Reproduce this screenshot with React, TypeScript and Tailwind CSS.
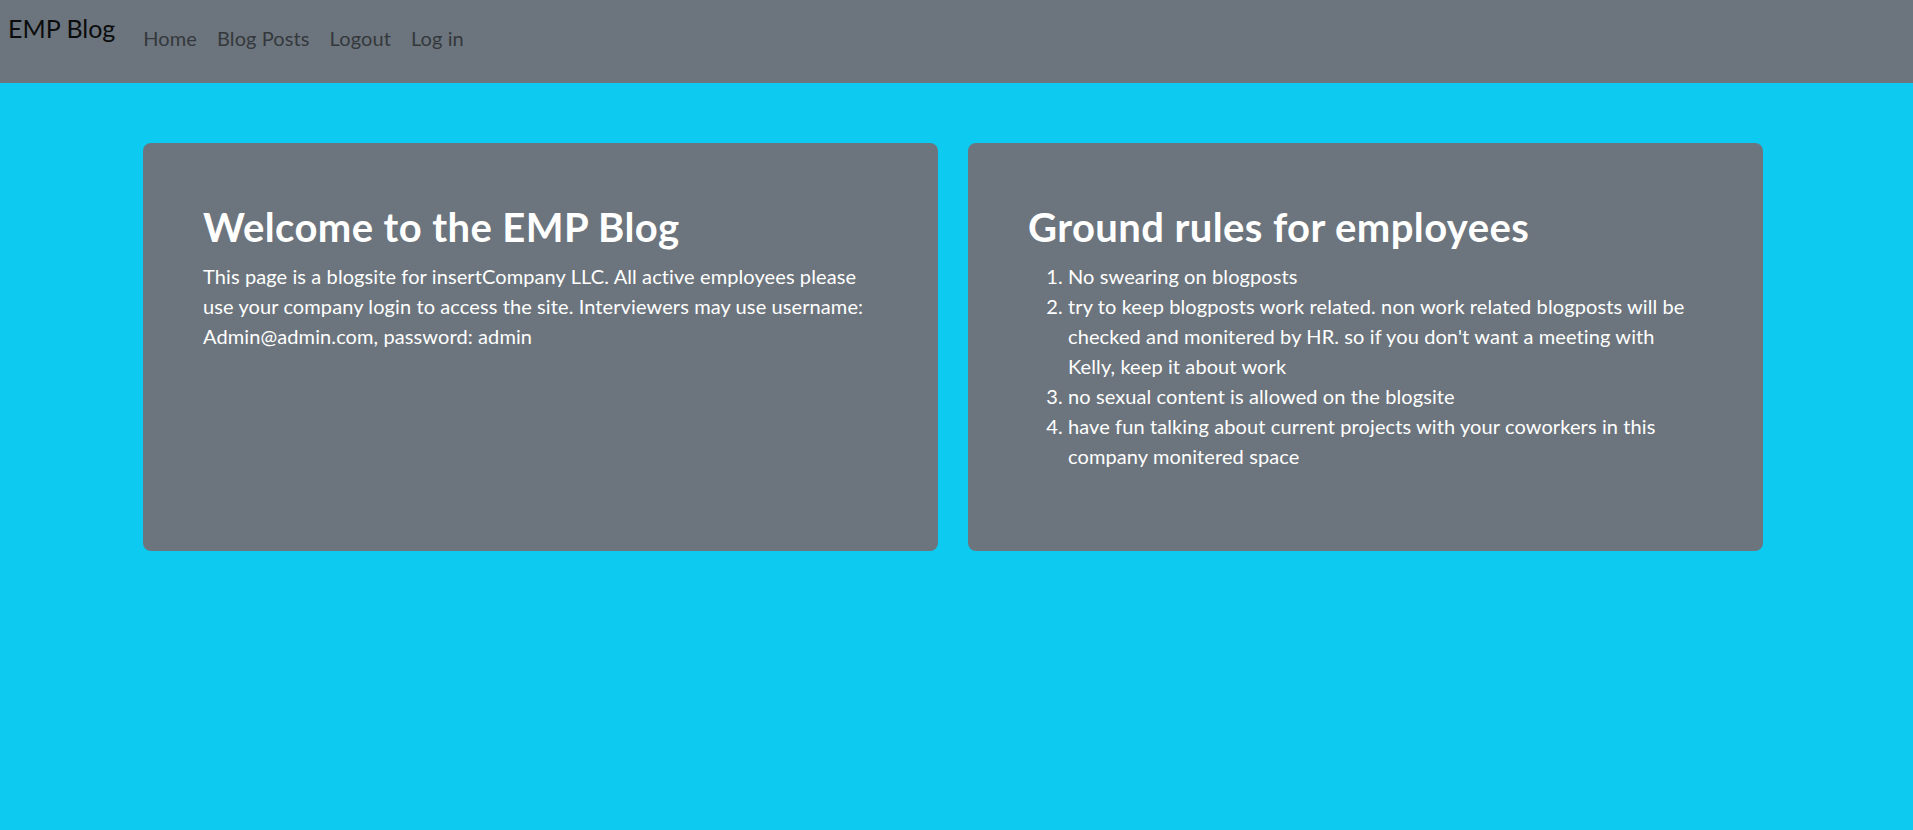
import React from "react";

export default function App() {
  const font = { fontFamily: 'Lato, "Noto Sans", sans-serif' };
  return (
    <div className="min-h-screen w-full bg-[#0dcaf0]" style={font}>
      <nav className="flex h-[83px] items-start bg-[#6c757d]">
        <a className="ml-[8px] mr-[18px] pt-[10px] text-[25px] leading-[37.5px] text-[#0b0c0d]">EMP Blog</a>
        <ul className="flex pt-[23px]">
          {["Home", "Blog Posts", "Logout", "Log in"].map((l) => (
            <li key={l}>
              <a className="px-[10px] text-[20px] leading-[30px] tracking-[0.1px] text-[#34383c]">{l}</a>
            </li>
          ))}
        </ul>
      </nav>
      <main className="pl-[143px] pt-[60px]">
        <div className="grid w-[1620px] grid-cols-2 gap-[30px]">
          <section className="rounded-[8px] bg-[#6c757d] p-[60px] text-white">
            <h2 className="mb-[10px] text-[40px] font-bold leading-[48px] tracking-[0.4px]">Welcome to the EMP Blog</h2>
            <p className="text-[20px] leading-[30px] tracking-[0.1px]">
              This page is a blogsite for insertCompany LLC. All active employees please use your company login to access the site. Interviewers may use username: Admin@admin.com, password: admin
            </p>
          </section>
          <section className="rounded-[8px] bg-[#6c757d] p-[60px] text-white">
            <h2 className="mb-[10px] text-[40px] font-bold leading-[48px] tracking-[0.4px]">Ground rules for employees</h2>
            <ol className="mb-[20px] list-decimal pl-[40px] pr-[4px] text-[20px] leading-[30px] tracking-[0.1px]">
              <li>No swearing on blogposts</li>
              <li>try to keep blogposts work related. non work related blogposts will be checked and monitered by HR. so if you don't want a meeting with Kelly, keep it about work</li>
              <li>no sexual content is allowed on the blogsite</li>
              <li>have fun talking about current projects with your coworkers in this company monitered space</li>
            </ol>
          </section>
        </div>
      </main>
    </div>
  );
}
